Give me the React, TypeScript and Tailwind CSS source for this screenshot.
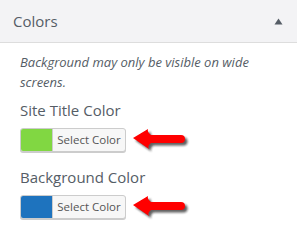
import React from "react";

function Arrow({ id }: { id: string }) {
  return (
    <svg width="60" height="28" viewBox="0 0 60 28" className="-my-[2px] ml-[5px]">
      <defs>
        <filter id={id} x="-20%" y="-40%" width="150%" height="200%">
          <feGaussianBlur stdDeviation="1.3" />
        </filter>
      </defs>
      <path
        d="M2 12 L17 3 Q16 6 20 9 L50 9 Q54 9 54 13 Q54 17 50 17 L20 17 Q16 20 18 23 Z"
        fill="#1a1a1a"
        opacity="0.7"
        transform="translate(2.5 2.5)"
        filter={`url(#${id})`}
      />
      <path
        d="M2 12 L17 3 Q16 6 20 9 L50 9 Q54 9 54 13 Q54 17 50 17 L20 17 Q16 20 18 23 Z"
        fill="#ff0000"
      />
    </svg>
  );
}

function ColorRow({ label, color, id }: { label: string; color: string; id: string }) {
  return (
    <div className="flex flex-col">
      <div className="text-[15px] leading-[20px] text-[#555d66]">{label}</div>
      <div className="mt-[8px] flex h-[24px] items-center">
        <div className="flex h-[24px] w-[106px] overflow-hidden rounded-[3px] border border-[#cccccc] bg-[#f7f7f7] shadow-[0_1px_0_#cccccc]">
          <div className="w-[31px]" style={{ backgroundColor: color }} />
          <div className="flex flex-1 items-center justify-center border-l border-[#cccccc] text-[11.5px] text-[#555555]">
            Select Color
          </div>
        </div>
        <Arrow id={id} />
      </div>
    </div>
  );
}

export default function App() {
  return (
    <div className="h-[248px] w-[297px] bg-white" style={{ fontFamily: '"Open Sans", sans-serif' }}>
      <div className="flex h-[43px] items-center justify-between border-b border-[#dddddd] bg-[#f3f3f5] pl-[13px] pr-[14px]">
        <span className="text-[15px] text-[#555d66]">Colors</span>
        <svg width="9" height="7" viewBox="0 0 9 7">
          <path d="M0.5 6.5 L4.5 0.5 L8.5 6.5 Z" fill="#555d66" />
        </svg>
      </div>
      <div className="px-[20px] pt-[9px]">
        <p className="text-[13px] italic leading-[20px] text-[#555d66]">
          Background may only be visible on wide screens.
        </p>
        <div className="mt-[8px]">
          <ColorRow label="Site Title Color" color="#81d742" id="s1" />
        </div>
        <div className="mt-[15px]">
          <ColorRow label="Background Color" color="#1e73be" id="s2" />
        </div>
      </div>
    </div>
  );
}
